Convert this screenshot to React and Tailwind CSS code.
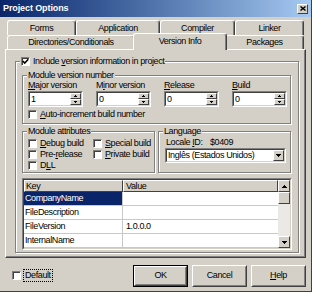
import React from 'react';

// bordures style Windows classique
const raised = 'border border-t-white border-l-white border-r-[#404040] border-b-[#404040]';
const etched = 'border border-[#808080] shadow-[inset_1px_1px_0_#fff,1px_1px_0_#fff]';

const Arrow = ({ up, small }) =>
  small ? (
    <svg width="3" height="2" viewBox="0 0 3 2" shapeRendering="crispEdges">
      <path d={up ? 'M1 0h1v1h-1z M0 1h3v1h-3z' : 'M0 0h3v1h-3z M1 1h1v1h-1z'} fill="#000" />
    </svg>
  ) : (
    <svg width="5" height="3" viewBox="0 0 5 3" shapeRendering="crispEdges">
      <path
        d={up ? 'M2 0h1v1h-1z M1 1h3v1h-3z M0 2h5v1h-5z' : 'M0 0h5v1h-5z M1 1h3v1h-3z M2 2h1v1h-1z'}
        fill="#000"
      />
    </svg>
  );

const Sunken = ({ className = '', inner = '', children }) => (
  <div className={`border border-t-[#808080] border-l-[#808080] border-b-white border-r-white ${className}`}>
    <div className={`h-full w-full border border-t-[#404040] border-l-[#404040] border-b-[#d4d0c8] border-r-[#d4d0c8] ${inner}`}>
      {children}
    </div>
  </div>
);

const Check = ({ checked }) => (
  <span className="w-[9px] h-[9px] shrink-0 bg-white flex items-center justify-center border border-t-[#808080] border-l-[#808080] border-b-white border-r-white shadow-[inset_1px_1px_0_#404040]">
    {checked && (
      <svg width="7" height="7" viewBox="0 0 7 7">
        <path d="M0.8 3.1 L2.7 5.1 L6.3 1.2" stroke="#000" strokeWidth="1.5" fill="none" />
      </svg>
    )}
  </span>
);

const Group = ({ legend, className = '', children }) => (
  <div className={`relative ${etched} ${className}`}>
    <div className="absolute left-[4px] top-[-6px] bg-[#d4d0c8] px-[1px] leading-[10px] flex items-center gap-[3px]">
      {legend}
    </div>
    {children}
  </div>
);

const Spin = ({ value }) => (
  <Sunken className="w-[55px] h-[16px]" inner="bg-white flex">
    <span className="flex-1 pl-[1px] leading-[12px]">{value}</span>
    <div className="w-[11px] flex flex-col">
      <div className={`flex-1 bg-[#d4d0c8] flex items-center justify-center ${raised}`}>
        <Arrow up small />
      </div>
      <div className={`flex-1 bg-[#d4d0c8] flex items-center justify-center ${raised}`}>
        <Arrow small />
      </div>
    </div>
  </Sunken>
);

const Button = ({ children, def }) => (
  <div className={`w-[55px] h-[22px] ${def ? 'border border-black' : ''}`}>
    <div className="h-full border border-t-white border-l-white border-b-[#404040] border-r-[#404040]">
      <div className="h-full flex items-center justify-center border border-t-[#d4d0c8] border-l-[#d4d0c8] border-b-[#808080] border-r-[#808080]">
        {children}
      </div>
    </div>
  </div>
);

const tabBase =
  'flex items-center justify-center shrink-0 bg-[#d4d0c8] border-t border-l border-r border-t-white border-l-white border-r-[#404040] rounded-t-[3px] shadow-[inset_-1px_0_0_#808080]';

export default function App() {
  const row1 = [
    ['Forms', 'w-[69px]'],
    ['Application', 'w-[84px]'],
    ['Compiler', 'w-[75px]'],
    ['Linker', 'w-[69px]'],
  ];
  const spins = [
    { label: <><u>M</u>ajor version</>, value: '1' },
    { label: <>M<u>i</u>nor version</>, value: '0' },
    { label: <><u>R</u>elease</>, value: '0' },
    { label: <><u>B</u>uild</>, value: '0' },
  ];
  const attrs = [
    <><u>D</u>ebug build</>,
    <><u>S</u>pecial build</>,
    <>Pre-<u>r</u>elease</>,
    <><u>P</u>rivate build</>,
    <>D<u>L</u>L</>,
  ];
  const rows = [
    ['CompanyName', '', true],
    ['FileDescription', ''],
    ['FileVersion', '1.0.0.0'],
    ['InternalName', ''],
  ];

  return (
    <div className="w-[312px] h-[292px] overflow-hidden bg-[#d4d0c8] text-black text-[9px] leading-[11px] tracking-[-0.4px] font-['Liberation_Sans',Arial,sans-serif] border-r border-b border-r-[#404040] border-b-[#404040]">
      {/* barre de titre */}
      <div className="h-[17px] flex items-center justify-between pl-[3px] pr-[3px] bg-linear-to-r from-[#0a246a] to-[#a6caf0]">
        <span className="text-white font-bold tracking-[-0.1px]">Project Options</span>
        <div className={`w-[11px] h-[10px] bg-[#d4d0c8] flex items-center justify-center ${raised}`}>
          <svg width="6" height="5" viewBox="0 0 6 5">
            <path d="M0.5 0.5 L5.5 4.5 M5.5 0.5 L0.5 4.5" stroke="#000" strokeWidth="1.4" />
          </svg>
        </div>
      </div>

      <div className="px-[5px] pt-[3px]">
        {/* onglets */}
        <div className="flex pl-[2px] h-[15px]">
          {row1.map(([t, w]) => (
            <div key={t} className={`${tabBase} ${w} h-[15px]`}>{t}</div>
          ))}
        </div>
        <div className="flex items-end pl-[2px] h-[14px] relative z-10">
          <div className={`${tabBase} w-[128px] h-[14px]`}>Directories/Conditionals</div>
          <div className={`${tabBase} relative z-10 w-[94px] -mx-[2px] h-[17px] -mb-[1px] pb-[2px]`}>Version Info</div>
          <div className={`${tabBase} w-[79px] h-[14px]`}>Packages</div>
        </div>

        {/* panneau */}
        <div className="w-[301px] h-[209px] pt-[11px] pl-[9px] border border-t-white border-l-white border-r-[#404040] border-b-[#404040] shadow-[inset_-1px_-1px_0_#808080]">
          <Group
            className="w-[284px] h-[192px] pt-[13px] pl-[6px]"
            legend={
              <>
                <Check checked />
                <span>
                  Include <u>v</u>ersion information in project
                </span>
              </>
            }
          >
            <Group legend="Module version number" className="w-[269px] h-[49px] pt-[4px] pl-[5px]">
              <div className="grid grid-cols-[55px_55px_55px_55px] gap-x-[13px]">
                {spins.map((s, i) => (
                  <div key={i} className="flex flex-col">
                    <span>{s.label}</span>
                    <Spin value={s.value} />
                  </div>
                ))}
              </div>
              <div className="mt-[2px] flex items-center gap-[3px]">
                <Check />
                <span>
                  <u>A</u>uto-increment build number
                </span>
              </div>
            </Group>

            <div className="mt-[7px] flex gap-[3px]">
              <Group legend="Module attributes" className="w-[133px] h-[42px] pt-[6px] pl-[5px]">
                <div className="grid grid-cols-[65px_65px] auto-rows-[11px]">
                  {attrs.map((a, i) => (
                    <div key={i} className="flex items-center gap-[3px]">
                      <Check />
                      <span>{a}</span>
                    </div>
                  ))}
                </div>
              </Group>
              <Group legend="Language" className="w-[133px] h-[42px] pt-[5px] pl-[6px]">
                <div className="flex pl-[1px]">
                  <span className="w-[44px]">
                    Locale <u>I</u>D:
                  </span>
                  <span>$0409</span>
                </div>
                <Sunken className="w-[121px] h-[15px]" inner="bg-white flex">
                  <span className="flex-1 pl-[1px] leading-[11px]">Inglês (Estados Unidos)</span>
                  <div className={`w-[11px] bg-[#d4d0c8] flex items-center justify-center ${raised}`}>
                    <Arrow />
                  </div>
                </Sunken>
              </Group>
            </div>

            {/* grille des clés */}
            <Sunken className="mt-[5px] w-[270px] h-[72px]" inner="flex bg-white">
              <div className="flex-1 flex flex-col">
                <div className="flex h-[12px] bg-[#d4d0c8]">
                  <div className={`w-[99px] pl-[1px] leading-[10px] ${raised}`}>Key</div>
                  <div className={`flex-1 pl-[2px] leading-[10px] ${raised}`}>Value</div>
                </div>
                {rows.map(([k, v, sel]) => (
                  <div key={k} className="flex h-[14px]">
                    <div
                      className={`w-[99px] pl-[1px] leading-[13px] border-r border-b border-[#c8c8c8] ${
                        sel ? 'bg-[#0a246a] text-white' : ''
                      }`}
                    >
                      {k}
                    </div>
                    <div className="flex-1 pl-[3px] leading-[13px] border-b border-[#c8c8c8]">{v}</div>
                  </div>
                ))}
              </div>
              <div className="w-[12px] flex flex-col bg-[#ebe9e5]">
                <div className={`h-[12px] bg-[#d4d0c8] flex items-center justify-center ${raised}`}>
                  <Arrow up />
                </div>
                <div className={`h-[12px] bg-[#d4d0c8] ${raised}`} />
                <div className="flex-1" />
                <div className={`h-[12px] bg-[#d4d0c8] flex items-center justify-center ${raised}`}>
                  <Arrow />
                </div>
              </div>
            </Sunken>
          </Group>
        </div>
      </div>

      {/* pied */}
      <div className="h-[33px] pt-[2px] flex items-center pl-[12px] pr-[5px]">
        <Check />
        <span className="ml-[2px] px-[1px] border border-dotted border-black leading-[11px]">Default</span>
        <div className="ml-auto flex gap-[4px]">
          <Button def>OK</Button>
          <Button>Cancel</Button>
          <Button>
            <span>
              <u>H</u>elp
            </span>
          </Button>
        </div>
      </div>
    </div>
  );
}
